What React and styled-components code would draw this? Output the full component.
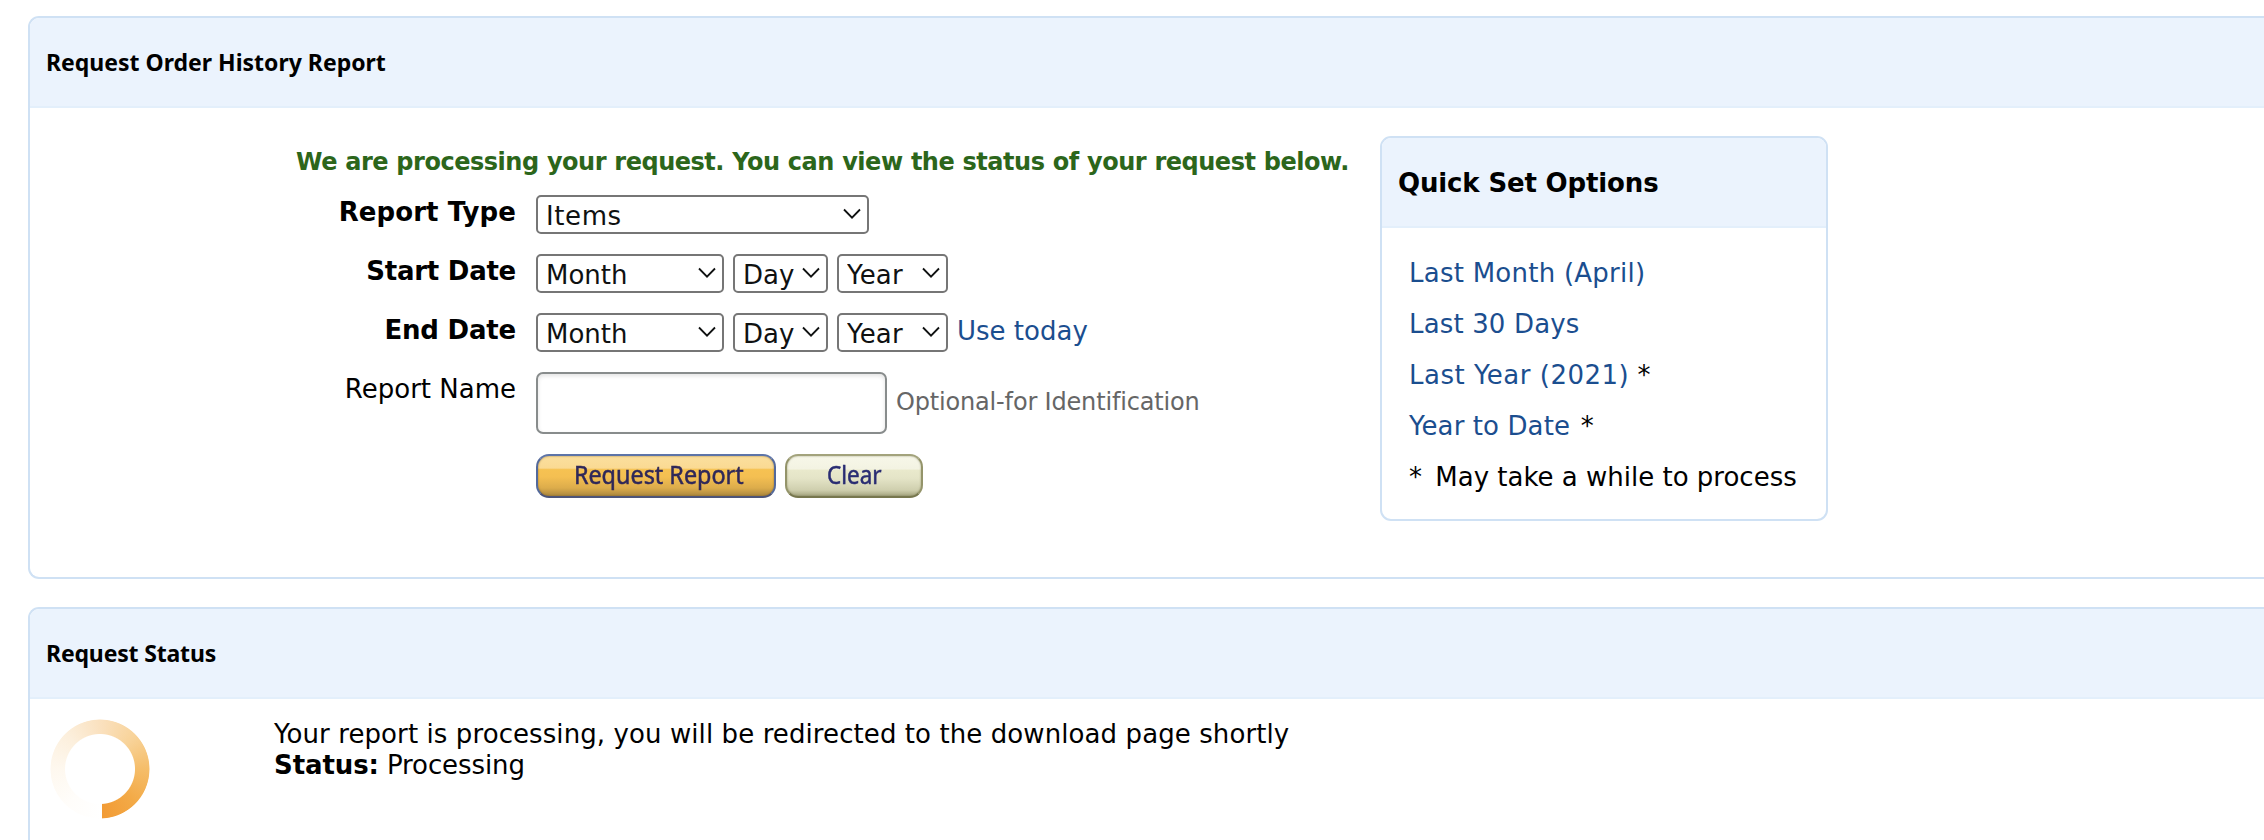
import React from "react";
import styled, { createGlobalStyle } from "styled-components";

const GlobalStyle = createGlobalStyle`
  * { box-sizing: border-box; }
  body {
    margin: 0;
    background: #fff;
    color: #000;
    font-family: Verdana, "DejaVu Sans", sans-serif;
    font-size: 26px;
    line-height: 31px;
    overflow: hidden;
  }
`;

const Page = styled.main`
  display: flex;
  flex-direction: column;
  gap: 28px;
  height: 840px;
  padding: 16px 0 0 28px;
  overflow: hidden;
`;

const Panel = styled.section`
  flex: none;
  height: ${(p) => p.$height}px;
  border: 2px solid #cfe1f4;
  border-right: none;
  border-radius: 11px 0 0 11px;
  overflow: hidden;
`;

const PanelHeader = styled.header`
  height: 90px;
  padding: 28px 0 0 16px;
  background: #ebf3fd;
  border-bottom: 2px solid #e3effb;
`;

const PanelTitle = styled.h2`
  margin: 0;
  font: bold 23px/32px "Noto Sans", sans-serif;
  letter-spacing: ${(p) => p.$spacing || 0}px;
`;

const RequestBody = styled.div`
  display: flex;
  align-items: flex-start;
  gap: 30px;
  padding: 28px 0 0 266px;
`;

const Form = styled.form`
  width: 1054px;
`;

const Notice = styled.p`
  height: 59px;
  margin: 0;
  padding-top: 11px;
  color: #2c661b;
  font-size: 24px;
  font-weight: bold;
  line-height: 30px;
  letter-spacing: -0.48px;
  word-spacing: 0.4px;
  white-space: nowrap;
`;

const Row = styled.div`
  display: grid;
  grid-template-columns: 220px 1fr;
  column-gap: 20px;
  height: ${(p) => p.$height || 59}px;
`;

const Label = styled.label`
  padding-top: 2px;
  text-align: right;
  font-weight: ${(p) => (p.$optional ? "normal" : "bold")};
  letter-spacing: ${(p) => p.$spacing || 0}px;
`;

const Controls = styled.div`
  display: flex;
  align-items: flex-start;
  gap: 9px;
`;

const SelectBox = styled.span`
  position: relative;
  width: ${(p) => p.$width}px;
  height: 39px;
`;

const Select = styled.select`
  appearance: none;
  display: block;
  width: 100%;
  height: 100%;
  margin: 0;
  padding: 4px 0 0 8px;
  border: 2px solid #767676;
  border-radius: 5px;
  background: #fff;
  color: #0f1111;
  font: inherit;
  letter-spacing: ${(p) => p.$spacing || 0}px;
`;

const Chevron = styled.svg`
  position: absolute;
  right: 8px;
  top: 13px;
  pointer-events: none;
`;

const Link = styled.a`
  color: #1b4e8f;
  text-decoration: none;
  letter-spacing: ${(p) => p.$spacing || 0}px;
`;

const TodayLink = styled(Link)`
  padding-top: 3px;
`;

const NameInput = styled.input`
  width: 351px;
  height: 62px;
  border: 2px solid #888c8c;
  border-radius: 7px;
  box-shadow: inset 0 2px 4px rgba(15, 17, 17, 0.12);
  background: #fff;
`;

const Hint = styled.span`
  padding-top: 15px;
  color: #666;
  font-size: 24px;
  line-height: 30px;
  letter-spacing: -0.17px;
`;

const Button = styled.button`
  display: flex;
  justify-content: center;
  width: ${(p) => p.$width}px;
  height: 44px;
  padding: 1px 0 0 ${(p) => p.$shift || 0}px;
  border: 2px solid;
  border-radius: 13px;
  font: 25px/34px "Noto Sans", sans-serif;
  -webkit-text-stroke: 0.5px;
`;

const PrimaryButton = styled(Button)`
  border-color: #5d74a8 #53699b #4c5478 #53699b;
  background: linear-gradient(#fbdf9e 0, #fada93 30%, #f6c252 34%, #f4bf52 52%, #dcac4b 80%, #aa863d 100%);
  box-shadow: inset 0 0 2px rgba(110, 80, 30, 0.7);
  color: #2f2859;
`;

const SecondaryButton = styled(Button)`
  border-color: #a3a37c #94946a #77774e #94946a;
  background: linear-gradient(#f7f7e9 0, #f3f3e2 32%, #e9e9cc 36%, #e4e4c7 56%, #cfcfae 85%, #a5a580 100%);
  box-shadow: inset 0 0 2px rgba(100, 100, 60, 0.6);
  color: #292c72;
`;

const ButtonText = styled.span`
  white-space: nowrap;
  transform: scaleX(${(p) => p.$stretch});
`;

const QuickPanel = styled.aside`
  width: 448px;
  height: 385px;
  border: 2px solid #cfe1f4;
  border-radius: 11px;
  overflow: hidden;
`;

const QuickTitle = styled.h3`
  margin: 0;
  font-size: 26px;
  line-height: 34px;
  letter-spacing: -0.15px;
`;

const QuickList = styled.ul`
  display: flex;
  flex-direction: column;
  gap: 20px;
  margin: 0;
  padding: 30px 0 0 27px;
  list-style: none;
  white-space: nowrap;
`;

const QuickItem = styled.li`
  letter-spacing: ${(p) => p.$spacing || 0}px;
  word-spacing: ${(p) => p.$words || 0}px;
`;

const Star = styled.span`
  letter-spacing: ${(p) => p.$gap || 0}px;
`;

const StatusBody = styled.div`
  display: flex;
  align-items: flex-start;
  gap: 124px;
  padding: 20px 0 0 20px;
`;

const Spinner = styled.div`
  width: 100px;
  height: 100px;
  border-radius: 50%;
  background: conic-gradient(
    from 180deg at 52px 50px,
    #fff 0deg, #fffdfa 45deg, #fef8ef 90deg, #fcefdc 135deg, #fae0bd 180deg,
    #f8d399 225deg, #f5bd69 270deg, #f3aa47 315deg, #f29b35 360deg
  );
  mask: radial-gradient(circle at 50px 50px, transparent 34.5px, #000 35.5px, #000 49px, transparent 50px);
`;

const StatusText = styled.div`
  white-space: nowrap;
`;

const StatusLine = styled.p`
  margin: 0;
  letter-spacing: ${(p) => p.$spacing || 0}px;
`;

function Dropdown({ width, value, spacing }) {
  return (
    <SelectBox $width={width}>
      <Select $spacing={spacing} defaultValue={value} aria-label={value}>
        <option>{value}</option>
      </Select>
      <Chevron width="18" height="12" viewBox="0 0 18 12" fill="none" stroke="#0f1111" strokeWidth="1.8">
        <path d="M1 1.5 9 9.7 17 1.5" />
      </Chevron>
    </SelectBox>
  );
}

function DateSelects() {
  return (
    <>
      <Dropdown width={188} value="Month" />
      <Dropdown width={95} value="Day" />
      <Dropdown width={111} value="Year" spacing={0.2} />
    </>
  );
}

export default function App() {
  return (
    <>
      <GlobalStyle />
      <Page>
        <Panel $height={563}>
          <PanelHeader>
            <PanelTitle>Request Order History Report</PanelTitle>
          </PanelHeader>
          <RequestBody>
            <Form>
              <Notice>We are processing your request. You can view the status of your request below.</Notice>
              <Row>
                <Label $spacing={0.1}>Report Type</Label>
                <Controls><Dropdown width={333} value="Items" spacing={0.6} /></Controls>
              </Row>
              <Row>
                <Label $spacing={-0.25}>Start Date</Label>
                <Controls><DateSelects /></Controls>
              </Row>
              <Row>
                <Label $spacing={-0.2}>End Date</Label>
                <Controls>
                  <DateSelects />
                  <TodayLink>Use today</TodayLink>
                </Controls>
              </Row>
              <Row $height={82}>
                <Label $optional>Report Name</Label>
                <Controls>
                  <NameInput type="text" />
                  <Hint>Optional-for Identification</Hint>
                </Controls>
              </Row>
              <Row>
                <span />
                <Controls>
                  <PrimaryButton type="button" $width={240} $shift={5}>
                    <ButtonText $stretch={0.935}>Request Report</ButtonText>
                  </PrimaryButton>
                  <SecondaryButton type="button" $width={138}>
                    <ButtonText $stretch={0.9}>Clear</ButtonText>
                  </SecondaryButton>
                </Controls>
              </Row>
            </Form>
            <QuickPanel>
              <PanelHeader>
                <QuickTitle>Quick Set Options</QuickTitle>
              </PanelHeader>
              <QuickList>
                <QuickItem><Link $spacing={0.25}>Last Month (April)</Link></QuickItem>
                <QuickItem><Link $spacing={0.15}>Last 30 Days</Link></QuickItem>
                <QuickItem><Link $spacing={0.5}>Last Year (2021)</Link> <Star>*</Star></QuickItem>
                <QuickItem $spacing={2.5}><Link $spacing={0.1}>Year to Date</Link> <Star>*</Star></QuickItem>
                <QuickItem><Star $gap={2.5}>* </Star>May take a while to process</QuickItem>
              </QuickList>
            </QuickPanel>
          </RequestBody>
        </Panel>
        <Panel $height={300}>
          <PanelHeader>
            <PanelTitle $spacing={-0.17}>Request Status</PanelTitle>
          </PanelHeader>
          <StatusBody>
            <Spinner />
            <StatusText>
              <StatusLine $spacing={0.09}>Your report is processing, you will be redirected to the download page shortly</StatusLine>
              <StatusLine $spacing={-0.1}><b>Status:</b> Processing</StatusLine>
            </StatusText>
          </StatusBody>
        </Panel>
      </Page>
    </>
  );
}
